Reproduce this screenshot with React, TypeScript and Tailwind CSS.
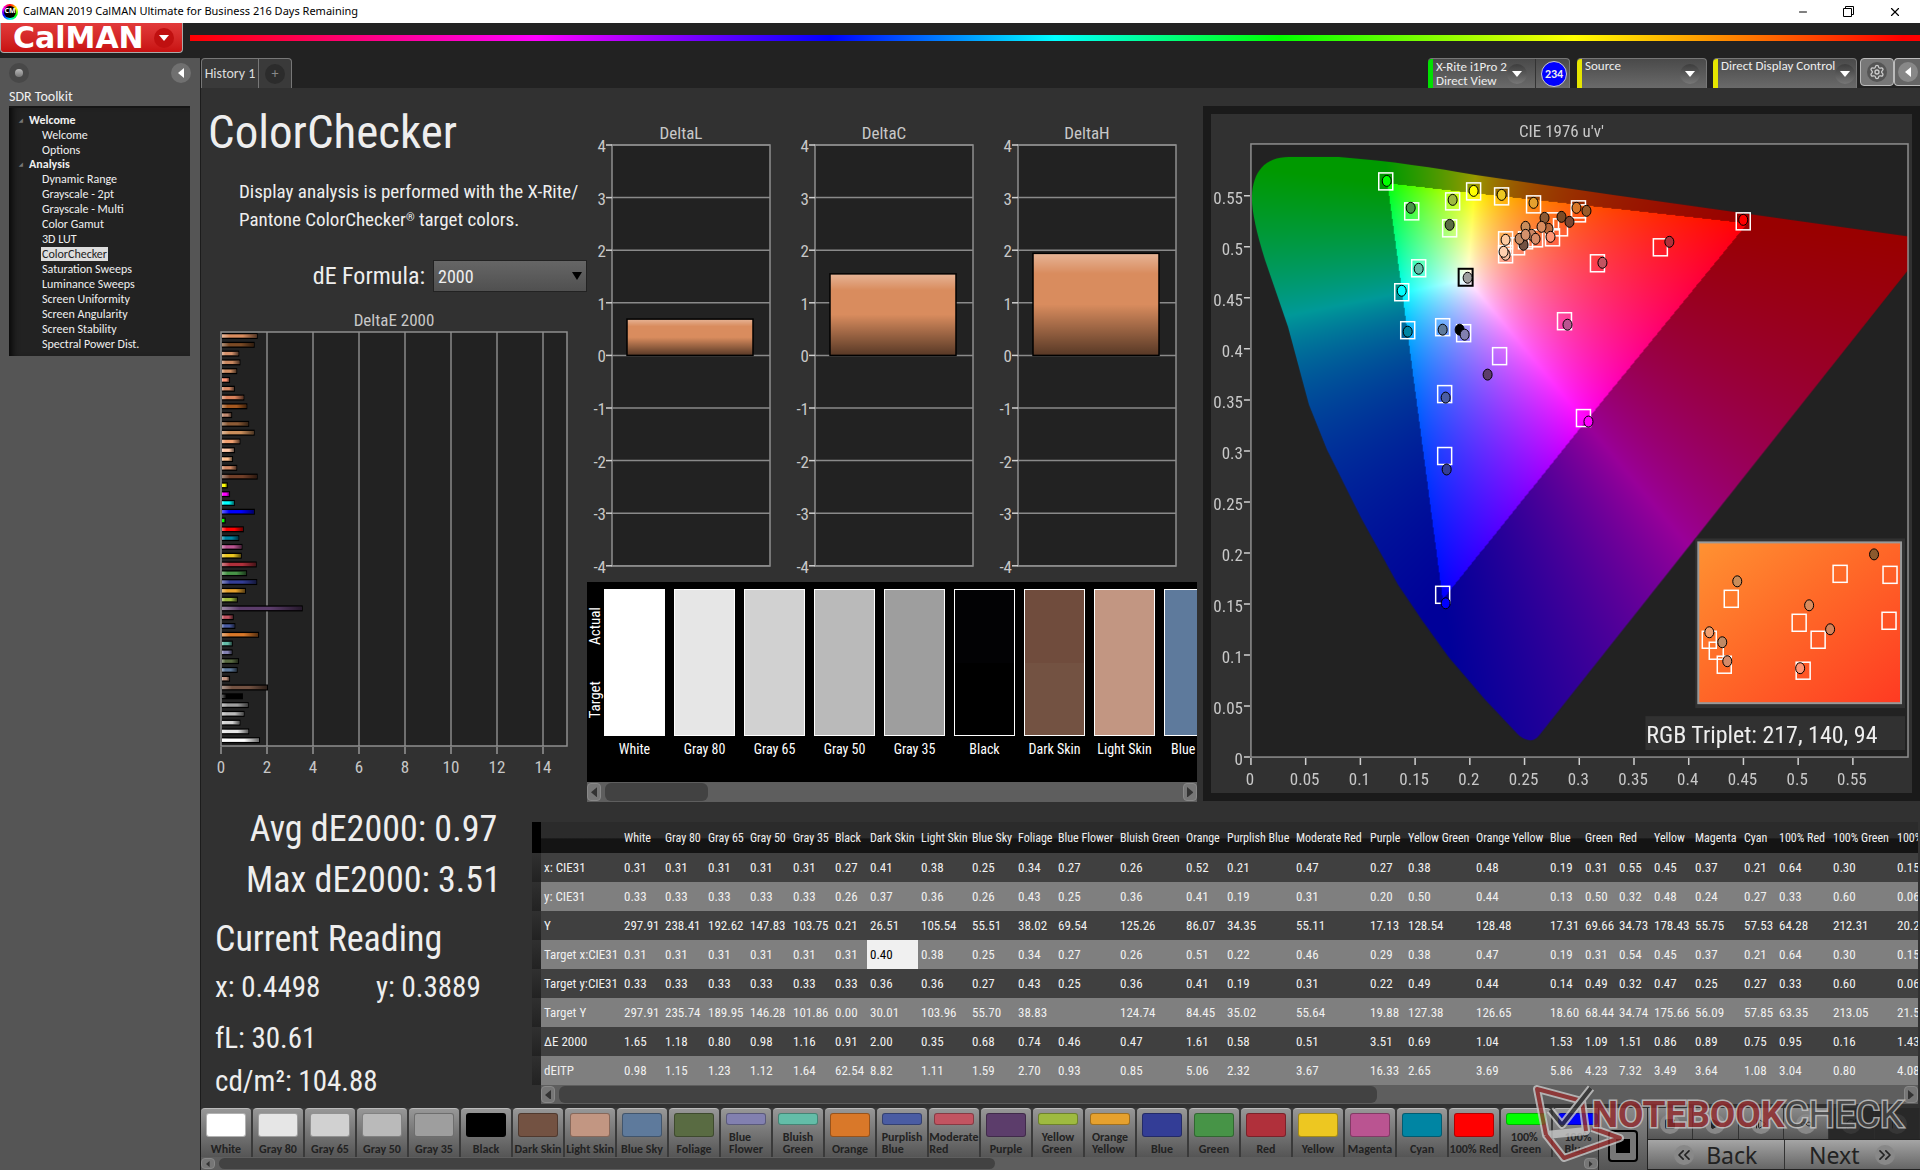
import { useEffect, useRef } from "react";
import type { ReactNode } from "react";
import { ChevronsLeft, ChevronsRight, Infinity as Loop, Play, RefreshCw, Settings, Square, StepForward, X, Minus, SkipBack } from "lucide-react";

type Patch = { name: string; color: string; actual?: string; values: string[] };

const rowLabels = ["x: CIE31", "y: CIE31", "Y", "Target x:CIE31", "Target y:CIE31", "Target Y", "ΔE 2000", "dEITP"];

const p = (name: string, color: string, values: string, actual?: string): Patch => ({ name, color, actual, values: values.split(" ").map((v) => (v === "-" ? "" : v)) });

const patches: Patch[] = [
  p("White", "#ffffff", "0.31 0.33 297.91 0.31 0.33 297.91 1.65 0.98"),
  p("Gray 80", "#e6e6e6", "0.31 0.33 238.41 0.31 0.33 235.74 1.18 1.15"),
  p("Gray 65", "#d1d1d1", "0.31 0.33 192.62 0.31 0.33 189.95 0.80 1.23"),
  p("Gray 50", "#bababa", "0.31 0.33 147.83 0.31 0.33 146.28 0.98 1.12"),
  p("Gray 35", "#9e9e9e", "0.31 0.33 103.75 0.31 0.33 101.86 1.16 1.64"),
  p("Black", "#000000", "0.27 0.26 0.21 0.31 0.33 0.00 0.91 62.54", "#020204"),
  p("Dark Skin", "#735242", "0.41 0.37 26.51 0.40 0.36 30.01 2.00 8.82", "#704c3d"),
  p("Light Skin", "#c29682", "0.38 0.36 105.54 0.38 0.36 103.96 0.35 1.11"),
  p("Blue Sky", "#5e7a9c", "0.25 0.26 55.51 0.25 0.27 55.70 0.68 1.59"),
  p("Foliage", "#596b42", "0.34 0.43 38.02 0.34 0.43 38.83 0.74 2.70"),
  p("Blue Flower", "#8280b0", "0.27 0.25 69.54 0.27 0.25 - 0.46 0.93"),
  p("Bluish Green", "#63bda8", "0.26 0.36 125.26 0.26 0.36 124.74 0.47 0.85"),
  p("Orange", "#d97829", "0.52 0.41 86.07 0.51 0.41 84.45 1.61 5.06"),
  p("Purplish Blue", "#4a5ca3", "0.21 0.19 34.35 0.22 0.19 35.02 0.58 2.32"),
  p("Moderate Red", "#c25461", "0.47 0.31 55.11 0.46 0.31 55.64 0.51 3.67"),
  p("Purple", "#5c3d6b", "0.27 0.20 17.13 0.29 0.22 19.88 3.51 16.33"),
  p("Yellow Green", "#9eba40", "0.38 0.50 128.54 0.38 0.49 127.38 0.69 2.65"),
  p("Orange Yellow", "#e6a12e", "0.48 0.44 128.48 0.47 0.44 126.65 1.04 3.69"),
  p("Blue", "#333d96", "0.19 0.13 17.31 0.19 0.14 18.60 1.53 5.86"),
  p("Green", "#479447", "0.31 0.50 69.66 0.31 0.49 68.44 1.09 4.23"),
  p("Red", "#b0303b", "0.55 0.32 34.73 0.54 0.32 34.74 1.51 7.32"),
  p("Yellow", "#edc721", "0.45 0.48 178.43 0.45 0.47 175.66 0.86 3.49"),
  p("Magenta", "#ba5491", "0.37 0.24 55.75 0.37 0.25 56.09 0.89 3.64"),
  p("Cyan", "#0085a3", "0.21 0.27 57.53 0.21 0.27 57.85 0.75 1.08"),
  p("100% Red", "#ff0000", "0.64 0.33 64.28 0.64 0.33 63.35 0.95 3.04"),
  p("100% Green", "#00ff00", "0.30 0.60 212.31 0.30 0.60 213.05 0.16 0.80"),
  p("100% Blue", "#0000ff", "0.15 0.06 20.2 0.15 0.06 21.5 1.43 4.08"),
];

const columnWidths = [41, 43, 42, 43, 42, 35, 51, 51, 46, 40, 62, 66, 41, 69, 74, 38, 68, 74, 35, 34, 35, 41, 49, 35, 54, 64, 60];

/* Bars above the named patches in the DeltaE chart, top to bottom. */
const skinBars: [string, number][] = [
  ["#d98c5e", 1.55], ["#7b4a25", 1.42], ["#d4916b", 0.75], ["#c8875f", 0.8], ["#cf8d62", 0.66], ["#ff9575", 0.35],
  ["#d98c68", 0.56], ["#d9805a", 0.97], ["#a4581f", 1.1], ["#c08a70", 0.44], ["#8b5a35", 1.18], ["#c98d5a", 1.42],
  ["#f0a070", 0.8], ["#ffc8a8", 0.56], ["#ffc090", 0.48], ["#cf8763", 0.66], ["#713f28", 1.55],
  ["#ffff00", 0.25], ["#ff00ff", 0.35], ["#00ffff", 0.56],
];
const deltaBars: [string, number][] = [...skinBars, ...[...patches].reverse().map((q): [string, number] => [q.color, Number(q.values[6])])];
const barPitch = 413 / deltaBars.length;

function DeltaEChart() {
  return (
    <svg viewBox="201 308 386 476" className="block w-full fill-[#c8c8c8] text-[17px]" role="img" aria-label="DeltaE 2000 by patch">
      <defs>
        <linearGradient id="sheenX">
          <stop offset="0" stopColor="#fff" stopOpacity=".4" />
          <stop offset=".22" stopColor="#fff" stopOpacity="0" />
          <stop offset=".6" stopColor="#000" stopOpacity="0" />
          <stop offset="1" stopColor="#000" stopOpacity=".6" />
        </linearGradient>
      </defs>
      <text x="394" y="326" textAnchor="middle">DeltaE 2000</text>
      <rect x="221" y="332" width="346" height="414" fill="#222" />
      {[1, 2, 3, 4, 5, 6, 7].map((i) => <path key={i} d={`M${221 + i * 46} 332v414`} stroke="#8a8a8a" strokeWidth="1.5" />)}
      {deltaBars.map(([color, v], i) => (
        <g key={i}>
          <rect x="221" y={333 + i * barPitch} width={v * 23 + 1} height="6" fill="#000" />
          <rect x="222" y={334.3 + i * barPitch} width={Math.max(v * 23 - 1, 1)} height="3.4" fill={color} />
          <rect x="222" y={334.3 + i * barPitch} width={Math.max(v * 23 - 1, 1)} height="3.4" fill="url(#sheenX)" />
        </g>
      ))}
      <rect x="221" y="332" width="346" height="414" fill="none" stroke="#8f8f8f" strokeWidth="1.5" />
      {[0, 1, 2, 3, 4, 5, 6, 7].map((i) => (
        <g key={i}>
          <path d={`M${221 + i * 46} 747v7`} stroke="#c8c8c8" />
          <text x={221 + i * 46} y="773" textAnchor="middle">{i * 2}</text>
        </g>
      ))}
    </svg>
  );
}

function DeltaCharts() {
  const charts = [
    { title: "DeltaL", x: 612, v: 0.69 },
    { title: "DeltaC", x: 815, v: 1.55 },
    { title: "DeltaH", x: 1018, v: 1.94 },
  ];
  return (
    <svg viewBox="587 118 616 464" className="block w-full fill-[#c8c8c8] text-[17px]" role="img" aria-label="DeltaL, DeltaC and DeltaH">
      <defs>
        <linearGradient id="sheenY" x2="0" y2="1">
          <stop offset="0" stopColor="#fff" stopOpacity=".35" />
          <stop offset=".2" stopColor="#fff" stopOpacity="0" />
          <stop offset=".5" stopColor="#000" stopOpacity="0" />
          <stop offset="1" stopColor="#000" stopOpacity=".6" />
        </linearGradient>
      </defs>
      {charts.map((c) => (
        <g key={c.title}>
          <text x={c.x + 69} y="139" textAnchor="middle">{c.title}</text>
          <rect x={c.x} y="145" width="158" height="421" fill="#222" stroke="#8f8f8f" strokeWidth="1.5" />
          {[4, 3, 2, 1, 0, -1, -2, -3, -4].map((n, i) => (
            <g key={n}>
              <path d={`M${c.x} ${145 + i * 52.6}h158`} stroke="#8a8a8a" strokeWidth="1.5" />
              <path d={`M${c.x - 6} ${145 + i * 52.6}h6`} stroke="#d0d0d0" strokeWidth="1.5" />
              <text x={c.x - 6} y={152 + i * 52.6} textAnchor="end">{n}</text>
            </g>
          ))}
          <rect x={c.x + 15} y={355.4 - c.v * 52.6} width="126" height={c.v * 52.6} fill="#d98c5e" />
          <rect x={c.x + 15} y={355.4 - c.v * 52.6} width="126" height={c.v * 52.6} fill="url(#sheenY)" stroke="#000" strokeWidth="1.5" />
        </g>
      ))}
    </svg>
  );
}

const locus =
  "M1251 196C1252 172 1264 157 1288 157L1338 157C1390 161 1435 168 1475 175L1613 195L1932 240L1538 737Q1534 742 1528 741Q1522 740 1517 735L1484 700L1448 658L1422 622L1397 585L1360 518L1326 450L1308 405L1287 327L1264 260Q1250 215 1251 196Z";

const u0 = (x: number) => (x - 1249.5) / 1096;
const v0 = (y: number) => (758 - y) / 1022;

/* Brightest display colour for a u'v' chromaticity, dimmed outside the gamut. */
function chroma(u: number, v: number): [number, number, number] {
  const Y = 1;
  const X = (9 * u) / (4 * v);
  const Z = (12 - 3 * u - 20 * v) / (4 * v);
  const lin = [3.2406 * X - 1.5372 * Y - 0.4986 * Z, -0.9689 * X + 1.8758 * Y + 0.0415 * Z, 0.0557 * X - 0.204 * Y + 1.057 * Z];
  const out = Math.min(...lin) < -0.002 * Math.max(...lin);
  const clipped = lin.map((c) => Math.max(0, c));
  const top = Math.max(...clipped);
  return clipped.map((c) => Math.pow(c / top, out ? 1 : 0.8) * (out ? 153 : 255)) as [number, number, number];
}

function Gamut() {
  const ref = useRef<HTMLCanvasElement>(null);
  useEffect(() => {
    const cv = ref.current;
    const ctx = cv?.getContext("2d");
    if (!cv || !ctx) return;
    const src = document.createElement("canvas");
    src.width = 702;
    src.height = 680;
    const sctx = src.getContext("2d")!;
    const img = sctx.createImageData(702, 680);
    for (let y = 0; y < 680; y++) {
      for (let x = 0; x < 702; x++) {
        const [r, g, b] = chroma(u0(x + 1210), Math.max(0.002, v0(y + 114)));
        img.data.set([r, g, b, 255], (y * 702 + x) * 4);
      }
    }
    sctx.putImageData(img, 0, 0);
    ctx.setTransform(1, 0, 0, 1, -1210, -114);
    ctx.beginPath();
    ctx.rect(1250, 144, 658, 614);
    ctx.clip();
    ctx.clip(new Path2D(locus));
    ctx.drawImage(src, 1210, 114);
  }, []);
  return <canvas ref={ref} width={702} height={680} className="absolute inset-0 w-full h-full" />;
}

const targets: [number, number][] = [
  [1385, 181], [1411, 211], [1452, 201], [1449, 228], [1473, 191], [1501, 196], [1533, 204], [1578, 209], [1578, 213], [1551, 221],
  [1560, 227], [1552, 237], [1505, 240], [1505, 254], [1517, 246], [1525, 240], [1535, 238], [1743, 221], [1660, 247], [1597, 263],
  [1418, 268], [1401, 292], [1407, 330], [1442, 327], [1463, 333], [1564, 321], [1499, 356], [1444, 394], [1583, 418], [1444, 456],
  [1442, 595], [1840, 574], [1890, 575], [1731, 599], [1799, 623], [1889, 621], [1818, 640], [1709, 640], [1716, 651], [1724, 665], [1803, 671],
];

const readings: [number, number, string][] = [
  [1386, 181, "#00ff00"], [1410, 208, "#479447"], [1452, 200, "#9eba40"], [1449, 225, "#596b42"], [1473, 191, "#ffff00"],
  [1501, 195, "#edc721"], [1533, 203, "#e6a12e"], [1576, 208, "#d97829"], [1586, 211, "#9a5a28"], [1561, 217, "#7b4a25"],
  [1569, 222, "#7a4530"], [1544, 218, "#8b5a35"], [1548, 229, "#b8693c"], [1541, 227, "#d98c5e"], [1525, 227, "#c98d5a"],
  [1550, 237, "#ff9575"], [1505, 240, "#ffcba0"], [1505, 255, "#f8c0a0"], [1503, 252, "#ffd0b0"], [1523, 245, "#735242"],
  [1519, 239, "#c08a65"], [1531, 235, "#cf8763"], [1535, 239, "#d88c68"], [1525, 235, "#d4916b"], [1743, 220, "#ff0000"],
  [1669, 242, "#b0303b"], [1602, 263, "#c25461"], [1418, 269, "#63bda8"], [1401, 291, "#00ffff"], [1407, 332, "#0085a3"],
  [1442, 330, "#5e7a9c"], [1459, 330, "#000000"], [1464, 335, "#8280b0"], [1567, 325, "#ba5491"], [1487, 375, "#5c3d6b"],
  [1445, 398, "#4a5ca3"], [1588, 422, "#ff00ff"], [1446, 470, "#333d96"], [1445, 604, "#0000ff"], [1467, 278, "#9e9e9e"],
  [1874, 555, "#8b5a2e"], [1737, 582, "#c98d5a"], [1809, 606, "#d98c5e"], [1830, 630, "#d4825a"], [1709, 633, "#f0a070"],
  [1722, 643, "#c08a65"], [1727, 662, "#d48a68"], [1800, 669, "#ff9575"],
];

function CieChart() {
  const ticks = Array.from({ length: 12 }, (_, i) => i);
  const label = (i: number) => String(Math.round(i * 5) / 100);
  return (
    <div className="relative">
      <svg viewBox="1210 114 702 680" className="block w-full" aria-hidden="true">
        <rect x="1250" y="144" width="658" height="614" fill="#222" />
      </svg>
      <Gamut />
      <svg viewBox="1210 114 702 680" className="absolute inset-0 w-full h-full fill-[#c8c8c8] text-[17px]" role="img" aria-label="CIE 1976 u'v' chart">
        <defs>
          <linearGradient id="inset" x2="1" y2="1">
            <stop offset="0" stopColor="#ff9232" />
            <stop offset=".45" stopColor="#ff6a28" />
            <stop offset="1" stopColor="#ff3a22" />
          </linearGradient>
        </defs>
        <text x="1561" y="137" textAnchor="middle">CIE 1976 u'v'</text>
        <rect x="1250" y="144" width="658" height="614" fill="none" stroke="#8f8f8f" strokeWidth="1.5" />
        {ticks.map((i) => (
          <g key={i}>
            <path d={`M1243 ${758 - i * 51.1}h6M${1250 + i * 54.8} 759v7`} stroke="#d0d0d0" strokeWidth="1.5" />
            <text x="1242" y={766 - i * 51.1} textAnchor="end">{label(i)}</text>
            <text x={1249 + i * 54.8} y="786" textAnchor="middle">{label(i)}</text>
          </g>
        ))}
        <rect x="1695" y="539" width="210" height="170" fill="#313131" />
        <rect x="1698" y="543" width="203" height="161" fill="url(#inset)" stroke="#999" strokeWidth="2" />
        <rect x="1645" y="717" width="260" height="34" fill="#313131" />
        <text x="1646" y="744" className="fill-[#eee] text-[24px]">RGB Triplet: 217, 140, 94</text>
        {targets.map(([x, y], i) => <rect key={i} x={x - 7} y={y - 8} width="14" height="17" fill="none" stroke="#fff" strokeWidth="1.5" />)}
        <rect x="1458" y="269" width="14" height="17" fill="none" stroke="#000" strokeWidth="2" />
        {readings.map(([x, y, c], i) => <ellipse key={i} cx={x} cy={y} rx="4.5" ry="5.5" fill={c} stroke="#000" />)}
      </svg>
    </div>
  );
}

function ScrollBar({ thumb, className }: { thumb: string; className: string }) {
  return (
    <div className={`flex items-stretch bg-[#5e5e5e] py-px ${className}`}>
      <button aria-label="Scroll left" className="w-[14px] shrink-0 rounded-sm border border-[#888] bg-[#767676] flex items-center justify-center">
        <svg viewBox="0 0 6 10" className="h-2/3"><path d="M6 0L0 5l6 5z" fill="#333" /></svg>
      </button>
      <div className="flex-1 px-1"><div className={`h-full rounded-md bg-[#424242] ${thumb}`} /></div>
      <button aria-label="Scroll right" className="w-[14px] shrink-0 rounded-sm border border-[#888] bg-[#767676] flex items-center justify-center">
        <svg viewBox="0 0 6 10" className="h-2/3"><path d="M0 0l6 5-6 5z" fill="#333" /></svg>
      </button>
    </div>
  );
}

function Caret() {
  return (
    <span className="flex size-5 shrink-0 items-center justify-center rounded-full bg-gradient-to-b from-[#3d3d3d] to-[#777]">
      <svg viewBox="0 0 10 6" className="w-[10px]"><path d="M0 0h10L5 6z" fill="#fff" /></svg>
    </span>
  );
}

function Device({ color, children, className }: { color: string; children: ReactNode; className: string }) {
  return (
    <button className={`flex h-[30px] shrink-0 items-center rounded-t border-t border-r border-[#777] bg-gradient-to-b from-[#4a4a4a] to-[#6a6a6a] pr-[6px] text-left text-[13px] leading-[14px] whitespace-nowrap text-[#eee] ${className}`}>
      <span className={`mr-[3px] w-[5px] shrink-0 self-stretch rounded-tl ${color}`} />
      {children}
    </button>
  );
}

const tree = [
  { title: "Welcome", items: ["Welcome", "Options"] },
  { title: "Analysis", items: ["Dynamic Range", "Grayscale - 2pt", "Grayscale - Multi", "Color Gamut", "3D LUT", "ColorChecker", "Saturation Sweeps", "Luminance Sweeps", "Screen Uniformity", "Screen Angularity", "Screen Stability", "Spectral Power Dist."] },
];

function Sidebar() {
  return (
    <aside className="w-[200px] shrink-0 bg-[#555] px-[9px] text-[#f0f0f0]">
      <div className="flex h-[30px] items-center justify-between">
        <span className="flex size-5 items-center justify-center rounded-full bg-[#484848]"><span className="size-2 rounded-full bg-gradient-to-b from-[#bbb] to-[#777]" /></span>
        <button aria-label="Collapse sidebar" className="flex size-5 items-center justify-center rounded-full bg-[#707070]">
          <svg viewBox="0 0 6 10" className="h-[10px]"><path d="M6 0L0 5l6 5z" fill="#fff" /></svg>
        </button>
      </div>
      <h2 className="h-[17px] text-sm leading-[17px]">SDR Toolkit</h2>
      <nav className="mt-px mr-px border-t-2 border-[#161616] bg-[#222] pt-[5px] pb-[5px] shadow-[inset_8px_0_8px_-6px_#000]">
        {tree.map((g) => (
          <div key={g.title}>
            <h3 className="flex h-[14px] items-center text-[12px] leading-[14px] font-bold"><span className="w-5 pl-[10px] text-[5px] text-[#777]">◢</span>{g.title}</h3>
            <ul>
              {g.items.map((it) => (
                <li key={it} className="flex h-[15px] items-center pl-8 text-[12px] leading-[14px]">
                  <a href="#" className={it === "ColorChecker" ? "bg-[#ddd] px-px text-[#222]" : "px-px"}>{it}</a>
                </li>
              ))}
            </ul>
          </div>
        ))}
      </nav>
    </aside>
  );
}

function PatchStrip() {
  return (
    <div className="mr-[6px]">
      <div className="flex h-[200px] overflow-hidden bg-black pt-[7px] text-white">
        <div className="flex w-[17px] shrink-0 flex-col justify-around pb-[46px] text-[15px]">
          <span className="rotate-180 self-center leading-[15px] [writing-mode:vertical-rl]">Actual</span>
          <span className="rotate-180 self-center leading-[15px] [writing-mode:vertical-rl]">Target</span>
        </div>
        {patches.slice(0, 9).map((q) => (
          <figure key={q.name} className="mr-[9px] w-[61px] shrink-0">
            <div className="flex h-[147px] flex-col border border-white">
              <div className="flex-1" style={{ background: q.actual ?? q.color }} />
              <div className="flex-1" style={{ background: q.color }} />
            </div>
            <figcaption className="mt-[3px] text-center text-[14px] leading-5 whitespace-nowrap">{q.name}</figcaption>
          </figure>
        ))}
      </div>
      <ScrollBar className="h-5" thumb="w-[103px]" />
    </div>
  );
}

function DataTable() {
  return (
    <div className="overflow-hidden">
      <table className="w-[1422px] table-fixed border-collapse text-left text-[13px] text-[#f0f0f0]">
        <colgroup>
          <col className="w-[9px]" />
          <col className="w-[80px]" />
          {columnWidths.map((w, i) => <col key={i} style={{ width: w }} />)}
        </colgroup>
        <thead>
          <tr className="h-[31px] bg-[linear-gradient(#2b2b2b_50%,#141414_55%)]">
            <td className="bg-black" />
            <td />
            {patches.map((q) => <th key={q.name} scope="col" className="p-0 pl-[3px] text-[12px] font-normal whitespace-nowrap">{q.name}</th>)}
          </tr>
        </thead>
        <tbody>
          {rowLabels.map((label, r) => (
            <tr key={label} className={r % 2 ? "h-[29px] bg-[#7f7f7f]" : "h-[29px] bg-[#404040]"}>
              <td className="bg-gradient-to-b from-[#303030] to-[#222]" />
              <th scope="row" className="p-0 pl-[3px] font-normal whitespace-nowrap">{label}</th>
              {patches.map((q, c) => (
                <td key={c} className={r === 3 && c === 6 ? "bg-[#f0f0f0] p-0 pl-[3px] text-black" : "p-0 pl-[3px]"}>{q.values[r]}</td>
              ))}
            </tr>
          ))}
        </tbody>
      </table>
      <ScrollBar className="ml-[9px] h-[19px]" thumb="w-[61%]" />
    </div>
  );
}

const oneLine = ["Gray 80", "Gray 65", "Gray 50", "Gray 35", "Dark Skin", "Light Skin", "Blue Sky", "100% Red"];

function PatchButtons() {
  return (
    <div className="min-w-0 flex-1 overflow-hidden bg-[#3a3a3a]">
      <div className="flex h-[49px] gap-[2px] overflow-hidden">
        {patches.map((q) => {
          const two = q.name.includes(" ") && !oneLine.includes(q.name);
          return (
            <button key={q.name} className="flex w-[50px] shrink-0 flex-col items-center justify-between rounded-t border-t border-[#bbb] bg-gradient-to-b from-[#979797] to-[#555] pt-1 pb-[2px] text-[12px] leading-3 font-bold text-[#222]">
              <span className={two ? "h-3 w-10 shrink-0 rounded-[3px] border border-black/30" : "h-6 w-10 shrink-0 rounded-[3px] border border-black/30"} style={{ background: q.color }} />
              {two ? (
                <span className="text-left">{q.name.split(" ")[0]}<br />{q.name.split(" ")[1]}</span>
              ) : (
                <span className="whitespace-nowrap">{q.name}</span>
              )}
            </button>
          );
        })}
      </div>
      <ScrollBar className="h-[13px]" thumb="w-[57%]" />
    </div>
  );
}

function Transport() {
  const icons = [Square, Play, StepForward, Loop, RefreshCw, SkipBack];
  const names = ["Stop", "Read", "Step", "Continuous", "Refresh", "Rewind"];
  return (
    <div className="w-[272px] shrink-0">
      <div className="flex h-[31px]">
        {icons.map((Icon, i) => (
          <button key={names[i]} aria-label={names[i]} className={i < 4 ? "flex flex-1 items-center justify-center border-r border-[#333] bg-gradient-to-b from-[#8a8a8a] to-[#555]" : "flex flex-1 items-center justify-center border-r border-[#333] bg-[#2c2c2c] opacity-60"}>
            <span className={i < 4 ? "flex size-5 items-center justify-center rounded-full bg-[#888]" : "flex size-5 items-center justify-center rounded-full bg-[#444]"}><Icon className="size-3 text-[#222]" fill={i < 2 ? "#222" : "none"} /></span>
          </button>
        ))}
      </div>
      <div className="flex h-[30px] border-t border-[#222] text-[23px] leading-7 text-[#222] [font-family:'Noto_Sans',sans-serif]">
        <button className="flex flex-1 items-center justify-center gap-3 border-r border-[#333] bg-gradient-to-b from-[#a5a5a5] to-[#666]">
          <span className="rounded-full bg-[#888]"><ChevronsLeft className="size-5" /></span>Back
        </button>
        <button className="flex flex-1 items-center justify-center gap-4 bg-gradient-to-b from-[#a5a5a5] to-[#666]">
          Next<span className="rounded-full bg-[#888]"><ChevronsRight className="size-5" /></span>
        </button>
      </div>
    </div>
  );
}

function Watermark() {
  return (
    <svg viewBox="1530 1082 390 80" className="pointer-events-none absolute right-0 bottom-2 w-[390px] opacity-80" aria-label="NOTEBOOKCHECK">
      <g fill="none" strokeLinejoin="round">
        <path d="M1537 1089L1582 1101L1586 1131L1546 1135ZM1546 1135L1564 1158L1620 1138L1592 1128" stroke="#c8c8c8" strokeWidth="8" />
        <path d="M1546 1135L1537 1089L1582 1101L1586 1131M1546 1135L1564 1158L1620 1138L1592 1128" stroke="#993030" strokeWidth="4" />
        <path d="M1550 1110L1562 1125L1591 1088" stroke="#c8c8c8" strokeWidth="8" />
        <path d="M1550 1110L1562 1125L1591 1088" stroke="#333" strokeWidth="4" />
      </g>
      <text x="1592" y="1127" className="[font-family:Roboto,sans-serif] text-[37px] font-bold" stroke="#c8c8c8" strokeWidth="3" paintOrder="stroke">
        <tspan fill="#932a2d">NOTEBOOK</tspan><tspan fill="#444" className="font-normal">CHECK</tspan>
      </text>
    </svg>
  );
}

export default function App() {
  return (
    <div className="relative flex min-h-screen flex-col overflow-hidden bg-[#222] [font-family:Carlito,Lato,sans-serif]">
      <header>
        <div className="flex h-[23px] items-center bg-white pl-[6px] text-[11px] text-black [font-family:'Noto_Sans',sans-serif]">
          <span className="mr-[5px] -ml-1 rounded-full bg-[conic-gradient(red,yellow,lime,cyan,blue,magenta,red)] p-[2px]"><span className="flex size-3 items-center justify-center rounded-full bg-black text-[7px] font-bold text-white">CM</span></span>
          CalMAN 2019 CalMAN Ultimate for Business 216 Days Remaining
          <div className="ml-auto flex items-center gap-[34px] pr-[18px]">
            <button aria-label="Minimize"><Minus className="size-3" strokeWidth={2} /></button>
            <button aria-label="Restore">
              <svg viewBox="0 0 11 11" className="size-[11px]" fill="none" stroke="#000"><path d="M.5 2.5h8v8h-8zM2.500 2.500v-2h8v8h-2" /></svg>
            </button>
            <button aria-label="Close"><X className="size-[14px]" strokeWidth={2} /></button>
          </div>
        </div>
        <div className="flex h-[35px] items-start">
          <button className="flex h-[30px] w-[183px] shrink-0 items-center justify-between rounded-b border border-t-0 border-[#aaa] bg-gradient-to-b from-[#e23a3a] to-[#c81010] pr-2 pl-3 text-[30px] font-bold text-white [font-family:'DejaVu_Sans',sans-serif]">
            CalMAN
            <span className="flex size-5 items-center justify-center rounded-full bg-[#c01010]"><svg viewBox="0 0 10 6" className="w-[10px]"><path d="M0 0h10L5 6z" fill="#fff" /></svg></span>
          </button>
          <div className="mt-3 ml-[7px] h-[6px] flex-1 bg-[linear-gradient(90deg,#f00,#f0f_20%,#00f_37%,#0ff_50%,#0f0_63%,#ff0_80%,#f00_99%)]" />
        </div>
      </header>

      <div className="flex flex-1">
        <Sidebar />
        <div className="flex min-w-0 flex-1 flex-col border-l border-[#1c1c1c]">
          <div className="flex h-[30px] items-end justify-between">
            <div className="flex h-[30px] rounded-t border border-b-0 border-[#777] bg-[#3a3a3a] text-[14px] text-[#ddd]">
              <button className="w-[57px] border-r border-[#777]">History 1</button>
              <button aria-label="Add tab" className="flex w-8 items-center justify-center"><span className="flex size-5 items-center justify-center rounded-full bg-[#2c2c2c] text-[#888]">+</span></button>
            </div>
            <div className="flex items-start">
              <Device color="bg-[#00e000]" className="w-[142px]">
                <span className="flex-1">X-Rite i1Pro 2<br />Direct View</span><Caret />
                <span className="ml-[8px] h-full w-px bg-[#333]" />
                <span className="-mr-[4px] ml-[6px] flex size-[26px] shrink-0 items-center justify-center rounded-full border border-[#ccc] bg-[#00f] text-[12px] font-bold">234</span>
              </Device>
              <Device color="bg-[#e6e600]" className="ml-[7px] w-[130px]"><span className="flex-1 self-start">Source</span><Caret /></Device>
              <Device color="bg-[#e6e600]" className="ml-[6px] w-[144px]"><span className="flex-1 self-start">Direct Display Control</span><Caret /></Device>
              <button aria-label="Settings" className="ml-[3px] flex h-[28px] w-[34px] items-center justify-center rounded border border-[#bbb] bg-[#777] text-[#ccc]"><span className="flex size-5 items-center justify-center rounded-full bg-[#555]"><Settings className="size-4" /></span></button>
              <button aria-label="Expand" className="flex h-[28px] w-[26px] items-center justify-center rounded-l border border-r-0 border-[#bbb] bg-[#666]"><span className="flex size-5 items-center justify-center rounded-full bg-[#888]"><svg viewBox="0 0 6 10" className="h-[10px]"><path d="M6 0L0 5l6 5z" fill="#fff" /></svg></span></button>
            </div>
          </div>

          <main className="flex-1 bg-[#313131] text-[#eee] [font-family:'Roboto_Condensed',Roboto,sans-serif]">
            <div className="grid grid-cols-[386fr_616fr_717fr]">
              <section className="min-w-0">
                <h1 className="h-[78px] pt-2 pl-[7px] text-[47px] leading-[72px]">ColorChecker</h1>
                <p className="mt-3 pl-[38px] text-[19px] leading-7 whitespace-nowrap">Display analysis is performed with the X-Rite/<br />Pantone ColorChecker<sup className="text-[11px]">®</sup> target colors.</p>
                <div className="mt-[26px] flex h-[32px] items-center justify-end">
                  <label htmlFor="formula" className="mr-2 text-[24px]">dE Formula:</label>
                  <div className="relative">
                    <select id="formula" className="h-8 w-[154px] appearance-none border border-[#222] bg-gradient-to-b from-[#666] to-[#505050] pl-1 text-[18px]"><option>2000</option></select>
                    <svg viewBox="0 0 10 8" className="pointer-events-none absolute top-3 right-[5px] w-[10px]"><path d="M0 0h10L5 8z" fill="#000" /></svg>
                  </div>
                </div>
                <div className="mt-4"><DeltaEChart /></div>
              </section>
              <section className="min-w-0">
                <div className="pt-[30px]"><DeltaCharts /></div>
                <PatchStrip />
              </section>
              <section className="mt-[18px] min-w-0 self-start border-8 border-[#1a1a1a]"><CieChart /></section>
            </div>

            <div className="flex">
              <section className="w-[331px] shrink-0 pt-[2px] pl-[14px] text-[29px]">
                <div className="text-center text-[36px] leading-[51px]">
                  <p className="whitespace-nowrap">Avg dE2000: 0.97</p>
                  <p className="whitespace-nowrap">Max dE2000: 3.51</p>
                </div>
                <h2 className="mt-2 text-[36px] leading-[51px]">Current Reading</h2>
                <div className="grid grid-cols-[161px_1fr] leading-[44px]"><span>x: 0.4498</span><span>y: 0.3889</span></div>
                <p className="mt-1 leading-[51px]">fL: 30.61</p>
                <p className="leading-[34px]">cd/m²: 104.88</p>
              </section>
              <div className="mt-[20px] mr-[2px] min-w-0 flex-1"><DataTable /></div>
            </div>
          </main>

          <footer className="flex h-[62px] text-[#222]">
            <PatchButtons />
            <button aria-label="Pattern window" className="flex w-[50px] shrink-0 items-end justify-center border-x border-[#222] bg-gradient-to-b from-[#888] to-[#555] pb-2">
              <span className="flex h-8 w-[30px] items-center justify-center rounded border-2 border-black bg-[#777]"><span className="size-[14px] bg-black" /></span>
            </button>
            <Transport />
          </footer>
        </div>
      </div>
      <Watermark />
    </div>
  );
}
